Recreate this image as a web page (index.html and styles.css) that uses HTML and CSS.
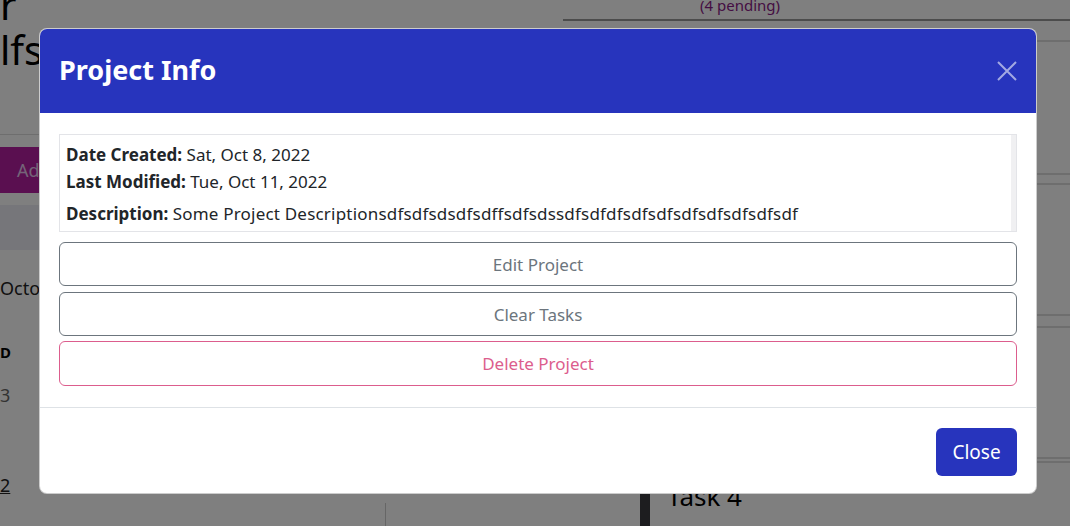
FILE: index.html
```html
<!DOCTYPE html>
<html>
<head>
<meta charset="utf-8">
<link rel="stylesheet" href="styles.css">
</head>
<body>
<div class="page">
  <div class="left-col">
    <div class="big-title"><div class="t1">r</div><div class="t2">lfs</div></div>
    <div class="add-btn">Add</div>
    <div class="band"></div>
    <div class="date-line">October</div>
    <div class="bold-line">D</div>
    <div class="num-line">3</div>
    <div class="link-line">2</div>
    <div class="left-foot"></div>
  </div>
  <div class="mid-col"></div>
  <div class="right-col">
    <div class="pending">(4 pending)</div>
    <div class="card-lines">
      <div class="rl r1"></div>
      <div class="rl r2"></div>
      <div class="rl r3"></div>
      <div class="rl r4"></div>
      <div class="rl r5"></div>
      <div class="rl r6"></div>
      <div class="rl r7"></div>
    </div>
    <div class="task">
      <div class="task-bar"></div>
      <div class="task-body">
        <div class="task-title">Task 4</div>
        <div class="task-sub">Task description</div>
      </div>
    </div>
  </div>
</div>
<div class="backdrop"></div>
<div class="modal">
  <div class="modal-header">
    <h4 class="modal-title">Project Info</h4>
    <svg class="close-x" width="20" height="20" viewBox="0 0 20 20"><path d="M1 1 L19 19 M19 1 L1 19" stroke="#a3a9e2" stroke-width="2" fill="none"/></svg>
  </div>
  <div class="modal-body">
    <div class="info-box">
      <div class="info-content">
        <div class="info-line"><b>Date Created:</b> Sat, Oct 8, 2022</div>
        <div class="info-line"><b>Last Modified:</b> Tue, Oct 11, 2022</div>
        <div class="info-line desc"><b>Description:</b> <span class="desc-text">Some Project Descriptionsdfsdfsdsdfsdffsdfsdssdfsdfdfsdfsdfsdfsdfsdfsdfsdf</span></div>
      </div>
      <div class="scroll-strip"></div>
    </div>
    <div class="btn-outline gray">Edit Project</div>
    <div class="btn-outline gray">Clear Tasks</div>
    <div class="btn-outline pink">Delete Project</div>
  </div>
  <div class="modal-footer">
    <div class="btn-close">Close</div>
  </div>
</div>
</body>
</html>
```
FILE: styles.css
```css
* { box-sizing: border-box; }
html, body { margin: 0; padding: 0; }
body {
  width: 1070px;
  height: 526px;
  overflow: hidden;
  font-family: "Noto Sans", "Open Sans", sans-serif;
  background: #fff;
  position: relative;
}
.page {
  display: flex;
  height: 526px;
  overflow: hidden;
}
.left-col {
  width: 386px;
  display: flex;
  flex-direction: column;
}
.big-title {
  font-size: 40px;
  color: #000;
  height: 135px;
  border-bottom: 1px solid #ddd;
  margin-bottom: 12px;
}
.t1 { line-height: 40px; margin-top: -15px; }
.t2 { line-height: 40px; margin-top: 5px; }
.add-btn {
  background: #b41fa0;
  color: #e8c8f0;
  height: 46px;
  font-size: 18px;
  line-height: 46px;
  padding-left: 17px;
}
.band {
  margin-top: 12px;
  height: 45px;
  background: #ececf4;
}
.date-line { margin-top: 26px; font-size: 18px; line-height: 24px; color: #222; }
.bold-line { margin-top: 42px; font-size: 15px; line-height: 20px; font-weight: bold; color: #000; }
.num-line { margin-top: 21px; font-size: 18px; line-height: 24px; color: #666; }
.link-line { margin-top: 66px; font-size: 18px; line-height: 24px; color: #222; text-decoration: underline; }
.left-foot { flex: 1; border-right: 1px solid #ccc; margin-top: 6px; }
.mid-col { width: 177px; }
.right-col {
  flex: 1;
  display: flex;
  flex-direction: column;
}
.pending {
  height: 21px;
  border-bottom: 2px solid #999;
  color: #8a1a86;
  font-size: 15px;
  line-height: 10px;
  padding-left: 137px;
  flex-shrink: 0;
}
.card-lines { height: 457px; flex-shrink: 0; }
.rl { border-top: 2px solid #ddd; margin-left: 474px; }
.r1 { margin-top: 19px; }
.r2 { margin-top: 131px; }
.r3 { margin-top: 8px; }
.r4 { margin-top: 129px; }
.r5 { margin-top: 10px; }
.r6 { margin-top: 129px; }
.r7 { margin-top: 2px; }
.task { display: flex; margin-left: 77px; height: 60px; flex-shrink: 0; }
.task-bar { width: 10px; background: #3a3a3e; }
.task-body { margin-left: 17px; }
.task-title { font-size: 26px; color: #000; line-height: 30px; margin-top: 3px; }
.task-sub { font-size: 16px; color: #666; line-height: 22px; margin-top: 11px; }

.backdrop {
  position: absolute;
  inset: 0;
  background: rgba(0, 0, 0, 0.5);
}
.modal {
  position: absolute;
  left: 39px;
  top: 28px;
  width: 998px;
  height: 466px;
  background: #fff;
  border-radius: 8px;
  border: 1px solid rgba(0,0,0,0.2);
  overflow: hidden;
  display: flex;
  flex-direction: column;
}
.modal-header {
  height: 85px;
  background: #2734bd;
  display: flex;
  align-items: center;
  justify-content: space-between;
  padding: 0 20px 0 20px;
  margin: -1px -1px 0 -1px;
  flex-shrink: 0;
}
.modal-title {
  margin: 0;
  color: #fff;
  font-size: 27px;
  font-weight: 700;
  line-height: 1.2;
}
.close-x { display: block; margin-top: 1px; }
.modal-body {
  padding: 21px 19px 21px 19px;
  display: flex;
  flex-direction: column;
  gap: 6px;
  border-bottom: 1px solid #dee2e6;
}
.info-box {
  border: 1px solid #e3e4e8;
  height: 98px;
  display: flex;
  margin-bottom: 4px;
}
.info-content {
  flex: 1;
  padding: 6px 6px;
  color: #212529;
  font-size: 17px;
}
.info-line { line-height: 27px; }
.info-line b { font-weight: 700; }
.info-line.desc { margin-top: 5px; }
.desc-text { letter-spacing: 0.2px; }
.scroll-strip { width: 5px; background: #f0f0f2; }
.btn-outline {
  height: 44px;
  border: 1px solid #6c757d;
  border-radius: 6px;
  display: flex;
  align-items: center;
  justify-content: center;
  font-size: 17px;
  color: #6c757d;
}
.btn-outline.pink { border-color: #dc5d8d; color: #dc5d8d; height: 45px; margin-top: -1px; }
.modal-footer {
  flex: 1;
  display: flex;
  justify-content: flex-end;
  align-items: flex-start;
  padding: 20px 19px 0 0;
}
.btn-close {
  width: 81px;
  height: 48px;
  background: #2734bd;
  color: #fff;
  border-radius: 6px;
  font-size: 19px;
  display: flex;
  align-items: center;
  justify-content: center;
}
```
